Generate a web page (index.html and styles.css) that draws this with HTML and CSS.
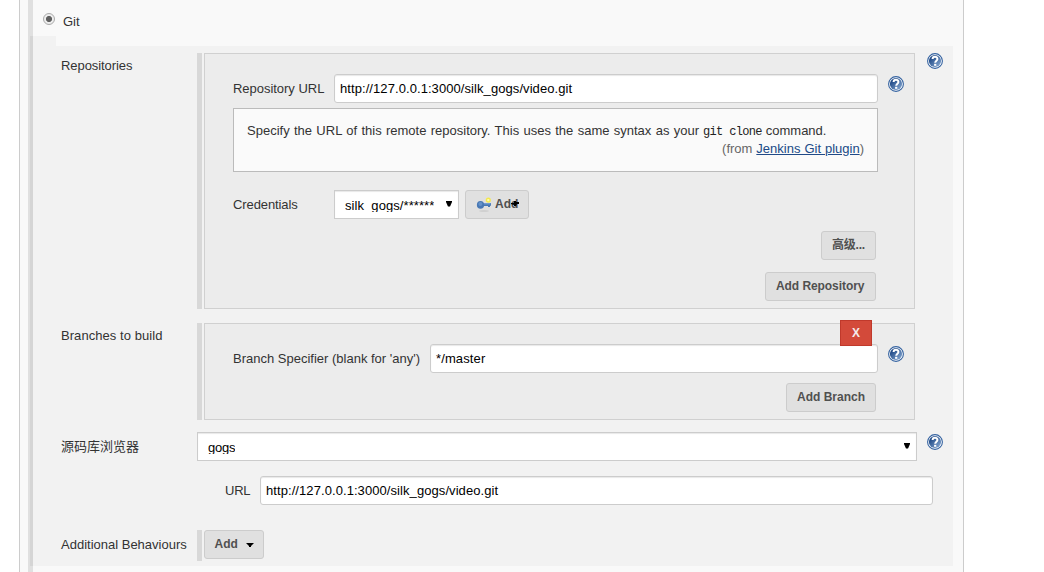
FILE: index.html
```html
<!DOCTYPE html>
<html lang="zh-CN">
<head>
<meta charset="utf-8">
<title>Git</title>
<link rel="stylesheet" href="styles.css">
</head>
<body>
<svg class="defs" width="0" height="0" aria-hidden="true">
  <defs>
    <linearGradient id="help-fill" x1="0" y1="0" x2="1" y2="1">
      <stop offset="0.2" stop-color="#204a87"/><stop offset="1" stop-color="#8fb0d8"/>
    </linearGradient>
    <symbol id="help" viewBox="0 0 16 16">
      <circle cx="8" cy="8" r="7.4" fill="#fff" stroke="#3462a0" stroke-width="1.1"/>
      <circle cx="8" cy="8" r="6.1" fill="url(#help-fill)"/>
      <path d="M5.6 6.1C5.6 3 10.4 3 10.4 6C10.4 7.7 8.2 7.7 8.2 9.8" fill="none" stroke="#fff" stroke-width="2"/>
      <rect x="7.1" y="10.8" width="2.2" height="2" fill="#fff"/>
    </symbol>
  </defs>
</svg>
<main class="panel">
  <div class="scm">
    <label class="scm-title"><span class="radio"></span><span class="t-git">Git</span></label>
    <div class="settings">
      <section class="row row-repos">
        <span class="label t-repositories">Repositories</span>
        <div class="group">
          <div class="box box-repo">
            <div class="field">
              <span class="name t-repourl">Repository URL</span>
              <div class="input"><span class="t-url">http://127.0.0.1:3000/silk_gogs/video.git</span></div>
              <svg class="help"><use href="#help"/></svg>
            </div>
            <div class="help-text">
              <p><span class="t-specify">Specify the URL of this remote repository. This uses the same syntax as your</span><code>git clone</code><span class="t-command">command.</span></p>
              <p class="from"><span class="t-from">(from <a>Jenkins Git plugin</a>)</span></p>
            </div>
            <div class="field credentials">
              <span class="name t-credentials">Credentials</span>
              <div class="select select-cred"><span class="value t-silk">silk_gogs/******</span><svg class="arrow" viewBox="0 0 6 6"><path d="M0 0H6V1L4 5.5H2L0 1Z"/></svg></div>
              <div class="button add-cred">
                <svg class="key" viewBox="0 0 16 16">
                  <ellipse cx="8" cy="14" rx="5" ry="0.8" fill="#cacaca"/>
                  <circle cx="12.3" cy="3.1" r="2.6" fill="#f4e84e"/>
                  <circle cx="12.3" cy="3.1" r="1.2" fill="#fffbb0"/>
                  <path d="M7 6H15V8.8H14V10H12V9H7Z" fill="#4878b4"/>
                  <path d="M7 6.8H14.5" stroke="#83aada" fill="none"/>
                  <ellipse cx="4.5" cy="7.9" rx="3.6" ry="3.8" fill="#4878b4"/>
                  <circle cx="4.4" cy="7.1" r="2" fill="#6592ca"/>
                </svg>
                <span class="t-add">Add</span>
                <svg class="caret caret-over" viewBox="0 0 8 5"><path d="M0 2H3V0H5V1H8V3H6L5 5H3V4L0 3Z"/></svg>
              </div>
            </div>
            <div class="actions actions-advanced"><div class="button b-advanced"><span class="t-adv">高级...</span></div></div>
            <div class="actions actions-repo"><div class="button b-repo"><span class="t-addrepo">Add Repository</span></div></div>
          </div>
        </div>
        <svg class="help"><use href="#help"/></svg>
      </section>
      <section class="row row-branches">
        <span class="label t-branches">Branches to build</span>
        <div class="group">
          <div class="box box-branch">
            <div class="delete">X</div>
            <div class="field field-branch">
              <span class="name t-specifier">Branch Specifier (blank for 'any')</span>
              <div class="input"><span class="t-master">*/master</span></div>
              <svg class="help"><use href="#help"/></svg>
            </div>
            <div class="actions actions-branch"><div class="button b-branch"><span class="t-addbranch">Add Branch</span></div></div>
          </div>
        </div>
      </section>
      <section class="row row-browser">
        <span class="label t-browser">源码库浏览器</span>
        <div class="select select-browser"><span class="value t-gogs">gogs</span><svg class="arrow" viewBox="0 0 6 6"><path d="M0 0H6V1L4 5.5H2L0 1Z"/></svg></div>
        <svg class="help"><use href="#help"/></svg>
      </section>
      <section class="field row-url">
        <span class="name t-urlname">URL</span>
        <div class="input"><span class="t-url">http://127.0.0.1:3000/silk_gogs/video.git</span></div>
      </section>
      <section class="row row-extra">
        <span class="label t-additional">Additional Behaviours</span>
        <div class="group"><div class="button add-extra"><span class="t-add">Add</span><svg class="caret" viewBox="0 0 8 5"><path d="M0 1H8L5 4V5H3V4Z"/></svg></div></div>
      </section>
    </div>
  </div>
</main>
</body>
</html>
```
FILE: styles.css
```css
* { box-sizing: border-box; }
body {
  margin: 0;
  height: 572px;
  overflow: hidden;
  background: #fff;
  color: #333;
  font: 13px/18px "Liberation Sans", "Noto Sans CJK SC", sans-serif;
  white-space: nowrap;
}
.defs { position: absolute; }
svg { display: block; flex: none; }
p { margin: 0; }

.panel {
  width: 945px;
  height: 572px;
  margin-left: 19px;
  padding-left: 8px;
  border: 1px solid #ccc;
  border-width: 0 1px;
  background: #f9f9f9;
}
.scm {
  width: 925px;
  height: 572px;
  border-left: 5px solid #e0e0e0;
}
.scm-title {
  display: flex;
  height: 36px;
  padding: 12px 0 0 10px;
}
.t-git { padding-top: 1px; }
.radio {
  width: 12px;
  height: 12px;
  margin: 1px 8px 0 0;
  border: 1px solid #aaa;
  border-radius: 50%;
  background: radial-gradient(circle, #606060 0 2.7px, #ededed 3.4px);
}
.settings {
  height: 530px;
  margin-left: -3px;
  padding: 17px 0 0 28px;
  border-left: 3px solid #d5d5d5;
  background: linear-gradient(#f9f9f9, #f9f9f9) 23px 0 / 900px 10px no-repeat #f2f2f2;
}

.row { display: flex; align-items: flex-start; }
.label { width: 136px; flex: none; }
.row > .label { padding-top: 4px; }
.group { padding-left: 2px; border-left: 5px solid #d8d8d8; }
.help { width: 16px; height: 16px; }
.row > .help { margin-left: 12px; }
.row-repos { height: 270px; }
.row-branches { height: 109px; }

.box {
  width: 711px;
  border: 1px solid #d0d0d0;
  background: #ececec;
  padding: 20px 10px 0 28px;
}
.box-repo { height: 256px; }
.box-branch { height: 97px; position: relative; }
.field { display: flex; align-items: center; }
.name { width: 101px; flex: none; }
.field > .help { margin: -9px 0 0 10px; }
.input {
  flex: 1;
  height: 29px;
  padding: 5px;
  border: 1px solid #ccc;
  border-radius: 3px;
  background: #fff;
  box-shadow: inset 0 1px 1px #e8e8e8;
  color: #000;
}
.help-text {
  width: 645px;
  height: 64px;
  margin-top: 5px;
  padding: 13px;
  border: 1px solid #bbb;
  background: #fafafa;
}
.help-text p { display: flex; height: 18px; }
.help-text .from { justify-content: flex-end; color: #666; }
code {
  margin: 0 4px;
  color: #222;
  font: 12px/20px "Liberation Mono", monospace;
  letter-spacing: -0.68px;
}
a { color: #204a87; text-decoration: underline; }

.t-repositories { letter-spacing: -0.07px; }
.t-repourl { letter-spacing: -0.03px; }
.t-url { letter-spacing: 0.075px; }
.t-specify { word-spacing: 0.72px; }
.t-from { word-spacing: 0.35px; }
.t-credentials { letter-spacing: -0.1px; }
.t-silk { letter-spacing: 0.07px; }
.t-addrepo { letter-spacing: -0.07px; }
.t-branches { letter-spacing: 0.06px; }
.t-master { letter-spacing: 0.12px; }
.t-gogs, .t-urlname { letter-spacing: -0.25px; }
.t-adv { letter-spacing: -0.2px; }

.credentials { margin-top: 18px; }
.select {
  display: flex;
  height: 29px;
  padding: 6px 6px 0 10px;
  border: 1px solid #ccc;
  background: #fff;
  box-shadow: inset 0 1px 1px #e8e8e8;
  color: #000;
}
.select-cred { width: 125px; }
.value { height: 15px; overflow: hidden; }
.arrow { width: 6px; height: 6px; margin: 4px 0 0 auto; }
.select-browser { width: 720px; }
.row > .select-browser + .help { margin: 2px 0 0 10px; }

.button {
  display: flex;
  height: 29px;
  padding: 4px 10px;
  border: 1px solid #ccc;
  border-radius: 3px;
  background: #e0e0e0;
  color: #505050;
  font-size: 12px;
  font-weight: bold;
}
.add-cred { width: 64px; margin-left: 6px; position: relative; }
.key { width: 16px; height: 16px; margin: 2px 3px 0 0; }
.caret { width: 8px; height: 5px; fill: #000; margin: 8px 0 0 8px; }
.caret-over { position: absolute; left: 45px; top: 10px; margin: 0; }
.actions { display: flex; justify-content: flex-end; padding-right: 28px; }
.actions-advanced { margin-top: 12px; }
.actions-repo { margin-top: 12px; }
.actions-branch { margin-top: 10px; }
.b-advanced { width: 55px; }
.b-repo { width: 111px; }
.b-branch { width: 90px; }
.delete {
  position: absolute;
  right: 42px;
  top: -4px;
  width: 32px;
  height: 26px;
  border: 1px solid #c0392b;
  background: #d34a3a;
  color: #f4eaea;
  font: bold 12px/24px "Liberation Sans", sans-serif;
  text-align: center;
}
.field-branch .name { width: 197px; }
.row-url { margin-top: 15px; padding-left: 164px; width: 872px; }
.row-url .name { width: 35px; }
.row-extra { margin-top: 25px; }
.row > .t-browser, .row > .t-additional { padding-top: 6px; }
.row-extra .group { height: 31px; }
.add-extra { width: 60px; }
.add-extra .t-add { margin-left: -0.5px; }
.add-extra .caret { margin-top: 7px; }
```
